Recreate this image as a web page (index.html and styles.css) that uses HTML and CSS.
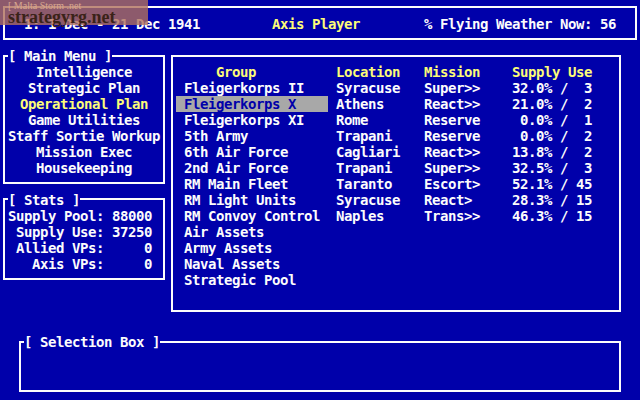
FILE: index.html
```html
<!DOCTYPE html>
<html lang="en">
  <head>
    <meta charset="UTF-8" />
    <meta name="viewport" content="width=device-width, initial-scale=1.0" />
    <title>Malta Storm</title>
    <link rel="stylesheet" href="styles.css">
  </head>
  <body>
    <div class="screen">
      <div class="box header">
        <span class="turn">1: 1 Dec - 21 Dec 1941</span>
        <span class="side">Axis Player</span>
        <span class="weather">% Flying Weather Now: 56</span>
      </div>

      <div class="main">
        <div class="left">
          <div class="box menu">
            <div class="title">[ Main Menu ]</div>
            <div class="item">Intelligence</div>
            <div class="item">Strategic Plan</div>
            <div class="item active">Operational Plan</div>
            <div class="item">Game Utilities</div>
            <div class="item">Staff Sortie Workup</div>
            <div class="item">Mission Exec</div>
            <div class="item">Housekeeping</div>
          </div>

          <div class="box stats">
            <div class="title">[ Stats ]</div>
            <div class="stat-grid">
              <span>Supply Pool:</span><span>88000</span>
              <span>Supply Use:</span><span>37250</span>
              <span>Allied VPs:</span><span>0</span>
              <span>Axis VPs:</span><span>0</span>
            </div>
          </div>
        </div>

        <div class="box groups">
          <div class="row head">
            <span class="grp">Group</span>
            <span>Location</span>
            <span>Mission</span>
            <span>Supply Use</span>
          </div>
          <div class="row"><span class="grp">Fleigerkorps II</span><span>Syracuse</span><span>Super&gt;&gt;</span><span class="sup">32.0% /  3</span></div>
          <div class="row"><span class="grp sel">Fleigerkorps X</span><span>Athens</span><span>React&gt;&gt;</span><span class="sup">21.0% /  2</span></div>
          <div class="row"><span class="grp">Fleigerkorps XI</span><span>Rome</span><span>Reserve</span><span class="sup"> 0.0% /  1</span></div>
          <div class="row"><span class="grp">5th Army</span><span>Trapani</span><span>Reserve</span><span class="sup"> 0.0% /  2</span></div>
          <div class="row"><span class="grp">6th Air Force</span><span>Cagliari</span><span>React&gt;&gt;</span><span class="sup">13.8% /  2</span></div>
          <div class="row"><span class="grp">2nd Air Force</span><span>Trapani</span><span>Super&gt;&gt;</span><span class="sup">32.5% /  3</span></div>
          <div class="row"><span class="grp">RM Main Fleet</span><span>Taranto</span><span>Escort&gt;</span><span class="sup">52.1% / 45</span></div>
          <div class="row"><span class="grp">RM Light Units</span><span>Syracuse</span><span>React&gt;</span><span class="sup">28.3% / 15</span></div>
          <div class="row"><span class="grp">RM Convoy Control</span><span>Naples</span><span>Trans&gt;&gt;</span><span class="sup">46.3% / 15</span></div>
          <div class="row"><span class="grp">Air Assets</span></div>
          <div class="row"><span class="grp">Army Assets</span></div>
          <div class="row"><span class="grp">Naval Assets</span></div>
          <div class="row"><span class="grp">Strategic Pool</span></div>
        </div>
      </div>

      <div class="box selection">
        <div class="title">[ Selection Box ]</div>
      </div>
    </div>

    <div class="watermark">
      <span class="wm-top">[ Malta Storm .net</span>
      <span class="wm-main">strategyrg.net</span>
    </div>
  </body>
</html>
```

FILE: styles.css
```css
html,
body {
  margin: 0;
  padding: 0;
}
body {
  width: 640px;
  height: 400px;
  overflow: hidden;
  position: relative;
  background: #0000aa;
  color: #fcfcfc;
  font-family: "DejaVu Sans Mono", "Liberation Mono", monospace;
  font-weight: bold;
  font-size: 14px;
  letter-spacing: -0.43px;
  line-height: 16px;
}
.screen {
  display: flex;
  flex-direction: column;
  padding-top: 6px;
}
.box {
  box-sizing: border-box;
  border: 2px solid #fcfcfc;
  display: flex;
  flex-direction: column;
}
.title {
  align-self: flex-start;
  background: #0000aa;
  white-space: pre;
  margin-left: 3px;
  height: 16px;
}

/* top status line */
.header {
  flex-direction: row;
  margin: 0 3px;
  width: 634px;
  height: 34px;
  padding: 8px 0 0 19px;
  white-space: pre;
}
.turn {
  width: 248px;
}
.side {
  width: 152px;
  color: #fcfc78;
}

.main {
  display: flex;
  gap: 6px;
  margin: 15px 0 0 3px;
}
.left {
  display: flex;
  flex-direction: column;
  gap: 14px;
  width: 162px;
}

/* main menu */
.menu {
  height: 129px;
}
.menu .title {
  margin-top: -9px;
}
.item {
  text-align: center;
  height: 16px;
}
.item.active {
  color: #fcfc78;
}

/* stats */
.stats {
  height: 82px;
}
.stats .title {
  margin-top: -8px;
}
.stat-grid {
  display: grid;
  grid-template-columns: 96px 48px;
  padding-left: 3px;
}
.stat-grid span {
  text-align: right;
  white-space: pre;
}

/* group table */
.groups {
  width: 450px;
  height: 257px;
  padding: 7px 0 0 3px;
}
.row {
  display: grid;
  grid-template-columns: 160px 88px 88px 80px;
  height: 16px;
  white-space: pre;
}
.grp {
  width: 152px;
  box-sizing: border-box;
  padding-left: 8px;
}
.grp.sel {
  background: #a8a8a8;
  color: #0000aa;
}
.head {
  color: #fcfc78;
}
.head .grp {
  padding-left: 40px;
}

/* selection box */
.selection {
  width: 602px;
  height: 51px;
  margin: 29px 0 0 19px;
}
.selection .title {
  margin-top: -9px;
}

/* site watermark */
.watermark {
  position: absolute;
  left: 0;
  top: 0;
  width: 148px;
  height: 25px;
  box-sizing: border-box;
  padding: 1px 0 0 8px;
  background: rgba(176, 112, 92, 0.8);
  display: flex;
  flex-direction: column;
  font-family: "Liberation Serif", serif;
  letter-spacing: 0;
}
.wm-top {
  font-size: 10px;
  line-height: 9px;
  color: #d8a890;
  font-weight: normal;
}
.wm-main {
  font-size: 18px;
  line-height: 15px;
  color: #3a2218;
}
```
